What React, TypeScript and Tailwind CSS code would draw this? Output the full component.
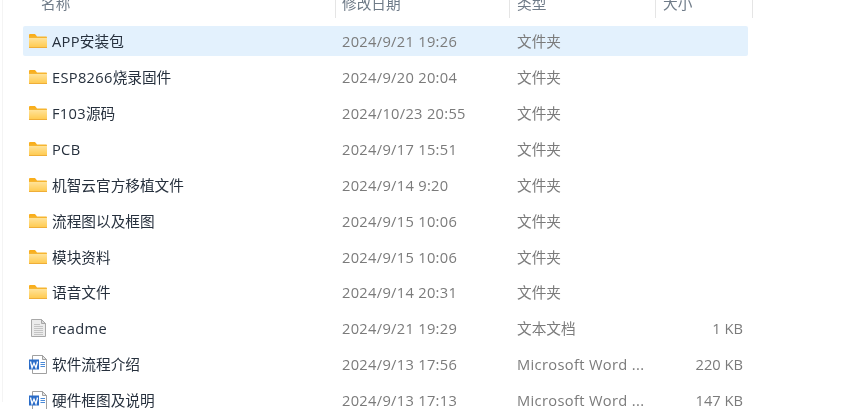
const FONT = "font-['Open_Sans','Noto_Sans_CJK_SC',sans-serif]";

function FolderIcon() {
  return (
    <svg width="18" height="14" viewBox="0 0 18 14" className="block">
      <defs>
        <linearGradient id="fb" x1="0" y1="0" x2="0" y2="1">
          <stop offset="0" stopColor="#ffe39a" />
          <stop offset="1" stopColor="#ffcb52" />
        </linearGradient>
      </defs>
      <path d="M0 1 Q0 0 1 0 H6 L8 2.5 V4 H0 Z" fill="#f9ae1c" />
      <rect x="0" y="2.5" width="18" height="11.5" rx="0.8" fill="#f6b530" />
      <rect x="0" y="4" width="18" height="9" fill="url(#fb)" />
      <rect x="0" y="13" width="18" height="1" fill="#efae38" />
    </svg>
  );
}

function TextIcon() {
  return (
    <svg width="15" height="18" viewBox="0 0 15 18" className="block">
      <path d="M0.5 0.5 H10.5 L14.5 4.5 V17.5 H0.5 Z" fill="#ececec" stroke="#a8a8a8" />
      <path d="M10.5 0.5 V4.5 H14.5 Z" fill="#d8d8d8" stroke="#a8a8a8" />
      <path d="M3 5.5 H9 M3 7.5 H12 M3 9.5 H12 M3 11.5 H12 M3 13.5 H12 M3 15.5 H12" stroke="#c4c4c4" />
    </svg>
  );
}

function WordIcon() {
  return (
    <svg width="19" height="19" viewBox="0 0 19 19" className="block">
      <path d="M3.5 0.5 H13.5 L17.5 4.5 V18.5 H3.5 Z" fill="#ffffff" stroke="#a0a0a0" />
      <path d="M13.5 0.5 V4.5 H17.5 Z" fill="#e4e4e4" stroke="#a0a0a0" />
      <path d="M11.5 7.5 H16 M11.5 9.5 H16 M11.5 11.5 H16" stroke="#4a8ad8" />
      <rect x="0" y="4.5" width="10" height="10" fill="#2a6cc8" />
      <path d="M1.5 6.5 L3 12.8 L5 8.2 L7 12.8 L8.5 6.5" fill="none" stroke="#ffffff" strokeWidth="1.3" />
    </svg>
  );
}

type Row = { latin?: string; name: string; date: string; type: string; size?: string; icon: "folder" | "text" | "word"; active?: boolean };

const rows: Row[] = [
  { latin: "APP", name: "安装包", date: "2024/9/21 19:26", type: "文件夹", icon: "folder", active: true },
  { latin: "ESP8266", name: "烧录固件", date: "2024/9/20 20:04", type: "文件夹", icon: "folder" },
  { latin: "F103", name: "源码", date: "2024/10/23 20:55", type: "文件夹", icon: "folder" },
  { latin: "PCB", name: "", date: "2024/9/17 15:51", type: "文件夹", icon: "folder" },
  { name: "机智云官方移植文件", date: "2024/9/14 9:20", type: "文件夹", icon: "folder" },
  { name: "流程图以及框图", date: "2024/9/15 10:06", type: "文件夹", icon: "folder" },
  { name: "模块资料", date: "2024/9/15 10:06", type: "文件夹", icon: "folder" },
  { name: "语音文件", date: "2024/9/14 20:31", type: "文件夹", icon: "folder" },
  { latin: "readme", name: "", date: "2024/9/21 19:29", type: "文本文档", size: "1 KB", icon: "text" },
  { name: "软件流程介绍", date: "2024/9/13 17:56", type: "Microsoft Word ...", size: "220 KB", icon: "word" },
  { name: "硬件框图及说明", date: "2024/9/13 17:13", type: "Microsoft Word ...", size: "147 KB", icon: "word" },
];

export default function App() {
  return (
    <div className={`h-[409px] w-[868px] overflow-hidden bg-white blur-[0.35px] ${FONT} text-[14.67px]`}>
      <div className="ml-[2px] h-full border-l border-[#f4f4f4]">
        <div className="mt-[-7px] flex h-[25px] text-[#6f7b88]">
          <div className="w-[332px] pl-[38px] leading-[20px]">名称</div>
          <div className="w-[174px] border-l border-[#e5e5e5] pl-[6px] leading-[20px]">修改日期</div>
          <div className="w-[146px] border-l border-[#e5e5e5] pl-[7px] leading-[20px]">类型</div>
          <div className="w-[98px] border-r border-l border-[#e5e5e5] pl-[7px] leading-[20px]">大小</div>
        </div>
        <div className="mt-[8.4px] ml-[20px] flex w-[725px] flex-col gap-[5.94px]">
          {rows.map((r) => (
            <div
              key={r.date + r.type + (r.latin ?? "") + r.name}
              className={`flex h-[30px] items-center rounded-[2px] ${r.active ? "bg-[#e3f1fd]" : ""}`}
            >
              <div className="flex w-[29px] justify-center pb-[1px] pl-[1px]">
                {r.icon === "folder" ? <FolderIcon /> : r.icon === "text" ? <TextIcon /> : <WordIcon />}
              </div>
              <div className="w-[290px] pb-[1px] text-[#26303d]">
                {r.latin && <span className="tracking-[0.3px]">{r.latin}</span>}
                {r.name}
              </div>
              <div className="w-[175px] pb-[1px] tracking-[0.3px] text-[#7b7b7b]">{r.date}</div>
              <div
                className={`w-[155px] pb-[1px] whitespace-nowrap text-[#7b7b7b] ${
                  r.icon === "word" ? "tracking-[0.35px]" : ""
                }`}
              >
                {r.type}
              </div>
              <div className="w-[71px] pb-[1px] text-right text-[#7b7b7b]">{r.size}</div>
            </div>
          ))}
        </div>
      </div>
    </div>
  );
}
